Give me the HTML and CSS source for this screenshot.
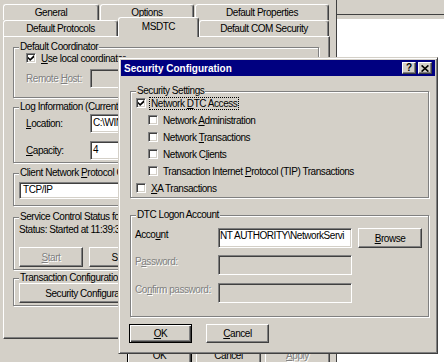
FILE: index.html
```html
<!DOCTYPE html>
<html lang="en">
<head>
    <meta charset="UTF-8">
    <meta name="viewport" content="width=device-width, initial-scale=1.0">
    <title>MSDTC Security Configuration</title>
    <link rel="stylesheet" href="styles.css">
</head>
<body>
    <div class="desktop">
        <div class="props">
            <div class="tab-row">
                <div class="tab w-general">General</div>
                <div class="tab w-options">Options</div>
                <div class="tab w-defprops">Default Properties</div>
            </div>
            <div class="tab-row">
                <div class="tab w-protocols">Default Protocols</div>
                <div class="tab w-msdtc selected">MSDTC</div>
                <div class="tab w-comsec">Default COM Security</div>
            </div>
            <div class="panel">
                <div class="group g-coord">
                    <div class="group-title">Default Coordinator</div>
                    <div class="check-row bg-check">
                        <span class="check"><svg viewBox="0 0 7 7"><polygon points="0,2 2.5,4.5 7,0 7,3 2.5,7 0,4.5"/></svg></span>
                        <span class="check-label"><u>U</u>se local coordinator</span>
                    </div>
                    <div class="field-row bg-field first">
                        <span class="field-label bg-label disabled">Remote <u>H</u>ost:</span>
                        <span class="edit disabled bg-edit"></span>
                    </div>
                </div>
                <div class="group g-log">
                    <div class="group-title">Log Information (Currently Active Log)</div>
                    <div class="field-row bg-field loc">
                        <span class="field-label bg-label"><u>L</u>ocation:</span>
                        <span class="edit bg-edit">C:\WINNT\System32\MSDtc\</span>
                    </div>
                    <div class="field-row bg-field cap">
                        <span class="field-label bg-label"><u>C</u>apacity:</span>
                        <span class="edit bg-edit">4</span>
                    </div>
                </div>
                <div class="group g-client">
                    <div class="group-title">Client Network <u>P</u>rotocol Configuration</div>
                    <div class="edit proto">TCP/IP</div>
                </div>
                <div class="group g-status">
                    <div class="group-title">Service Control Status for MSDTC</div>
                    <div class="status-line">Status: Started at 11:39:35 AM</div>
                    <div class="btn-row status-btns">
                        <button class="btn disabled w-small"><u>S</u>tart</button>
                        <button class="btn w-small">St<u>o</u>p</button>
                    </div>
                </div>
                <div class="group g-trans">
                    <div class="group-title">Transaction Configuration</div>
                    <button class="btn sec-btn">Security Configuration...</button>
                </div>
            </div>
            <div class="sheet-buttons">
                <button class="btn default w-sheet">OK</button>
                <button class="btn w-sheet">Cancel</button>
                <button class="btn disabled w-sheet"><u>A</u>pply</button>
            </div>
        </div>

        <div class="side">
            <div class="side-head"></div>
            <div class="side-gap"></div>
        </div>

        <div class="dialog">
            <div class="caption">
                <span class="caption-title">Security Configuration</span>
                <span class="cap-btn help">?</span>
                <span class="cap-btn close"><svg viewBox="0 0 8 7"><path d="M0.6 0.4 L7.4 6.6 M7.4 0.4 L0.6 6.6"/></svg></span>
            </div>
            <div class="dlg-body">
                <div class="group g-security">
                    <div class="group-title">Security Settings</div>
                    <div class="check-row dlg-check first">
                        <span class="check"><svg viewBox="0 0 7 7"><polygon points="0,2 2.5,4.5 7,0 7,3 2.5,7 0,4.5"/></svg></span>
                        <span class="check-label focus">Network <u>D</u>TC Access</span>
                    </div>
                    <div class="check-row dlg-check indent">
                        <span class="check"></span>
                        <span class="check-label">Network <u>A</u>dministration</span>
                    </div>
                    <div class="check-row dlg-check indent">
                        <span class="check"></span>
                        <span class="check-label">Network <u>T</u>ransactions</span>
                    </div>
                    <div class="check-row dlg-check indent">
                        <span class="check"></span>
                        <span class="check-label">Network C<u>l</u>ients</span>
                    </div>
                    <div class="check-row dlg-check indent">
                        <span class="check"></span>
                        <span class="check-label">Transaction Internet <u>P</u>rotocol (TIP) Transactions</span>
                    </div>
                    <div class="check-row dlg-check">
                        <span class="check"></span>
                        <span class="check-label"><u>X</u>A Transactions</span>
                    </div>
                </div>
                <div class="group g-logon">
                    <div class="group-title">DTC Logon Account</div>
                    <div class="logon-row account">
                        <span class="logon-label">Acco<u>u</u>nt</span>
                        <span class="edit logon-edit">NT AUTHORITY\NetworkServi</span>
                        <button class="btn browse"><u>B</u>rowse</button>
                    </div>
                    <div class="logon-row password">
                        <span class="logon-label disabled">P<u>a</u>ssword:</span>
                        <span class="edit disabled logon-edit"></span>
                    </div>
                    <div class="logon-row confirm">
                        <span class="logon-label disabled">Co<u>n</u>firm password:</span>
                        <span class="edit disabled logon-edit"></span>
                    </div>
                </div>
                <div class="btn-row dlg-buttons">
                    <button class="btn default w-dlg"><u>O</u>K</button>
                    <button class="btn w-dlg"><u>C</u>ancel</button>
                </div>
            </div>
        </div>
    </div>
</body>
</html>
```

FILE: styles.css
```css
* {
    box-sizing: border-box;
}

body {
    margin: 0;
    background-color: #fff;
    font-family: "Liberation Sans", Arial, sans-serif;
    font-size: 10px;
    letter-spacing: -0.45px;
    color: #000;
    overflow: hidden;
}

u {
    text-decoration: underline;
}

.desktop {
    position: relative;
    width: 444px;
    height: 362px;
    overflow: hidden;
}

/* property sheet behind the dialog */

.props {
    position: absolute;
    left: 0;
    top: 0;
    width: 337px;
    height: 362px;
    padding: 4px 0 0 3px;
    background-color: #d4d0c8;
    border-right: 1px solid #404040;
}

.tab-row {
    display: flex;
    align-items: flex-start;
    height: 16px;
}

.tab {
    height: 16px;
    line-height: 15px;
    text-align: center;
    white-space: nowrap;
    background-color: #d4d0c8;
    border: 1px solid;
    border-bottom: 0;
    border-color: #fff #404040 #fff #fff;
    border-radius: 3px 3px 0 0;
    box-shadow: inset -1px 0 #808080;
}

.w-general { width: 96px; margin-right: 1px; }
.w-options { width: 94px; margin-right: 1px; }
.w-defprops { width: 134px; }
.w-protocols { width: 115px; }
.w-msdtc { width: 81px; }
.w-comsec { width: 130px; }

.tab.selected {
    position: relative;
    z-index: 2;
    height: 20px;
    margin-top: -3px;
    line-height: 17px;
}

.panel {
    width: 327px;
    height: 303px;
    padding: 0 10px 0 9px;
    border: 1px solid;
    border-color: #fff #404040 #404040 #fff;
    box-shadow: inset -1px -1px #808080;
}

.group {
    border: 1px solid #808080;
    box-shadow: inset 1px 1px #fff, 1px 1px #fff;
}

.group-title {
    width: max-content;
    margin: -7px 0 0 5px;
    padding: 0 1px;
    line-height: 12px;
    background-color: #d4d0c8;
    white-space: nowrap;
}

.g-coord { margin-top: 10px; height: 51px; }
.g-log { margin-top: 9px; height: 56px; }
.g-client { margin-top: 10px; height: 33px; }
.g-status { margin-top: 11px; height: 53px; }
.g-trans { margin-top: 8px; height: 28px; }

.check-row {
    display: flex;
    align-items: flex-start;
    height: 17px;
    white-space: nowrap;
}

.check {
    flex: none;
    width: 10px;
    height: 10px;
    margin: 3px 3px 0 0;
    padding: 1px;
    background-color: #fff;
    border: 1px solid;
    border-color: #808080 #fff #fff #808080;
    box-shadow: inset 1px 1px #404040, inset -1px -1px #d4d0c8;
}

.check svg {
    display: block;
    width: 6px;
    height: 6px;
    fill: #000;
}

.check-label {
    margin-top: 2px;
    padding: 0 1px;
    line-height: 11px;
    border: 1px dotted transparent;
}

.check-label.focus {
    border-color: #000;
}

.bg-check {
    margin-top: -3px;
    padding-left: 12px;
}

.field-row {
    display: flex;
    align-items: center;
    white-space: nowrap;
}

.bg-field {
    padding-left: 12px;
}

.bg-field.first { margin-top: 2px; }
.bg-field.loc { margin-top: 1px; }
.bg-field.cap { margin-top: 8px; }

.bg-label {
    width: 64px;
}

.disabled {
    color: #808080;
    text-shadow: 1px 1px #fff;
}

.edit {
    display: block;
    height: 19px;
    padding: 0 1px;
    line-height: 15px;
    overflow: hidden;
    white-space: nowrap;
    background-color: #fff;
    border: 1px solid;
    border-color: #808080 #fff #fff #808080;
    box-shadow: inset 1px 1px #404040, inset -1px -1px #d4d0c8;
}

.edit.disabled {
    background-color: #d4d0c8;
}

.bg-edit {
    width: 200px;
    padding-left: 2px;
}

.proto {
    width: 292px;
    height: 17px;
    margin: 3px 0 0 5px;
    padding-left: 3px;
    line-height: 13px;
}

.status-line {
    margin: 1px 0 0 5px;
    line-height: 12px;
    white-space: nowrap;
}

.btn-row {
    display: flex;
}

.status-btns {
    margin: 11px 0 0 5px;
    gap: 6px;
}

.btn {
    flex: none;
    height: 20px;
    padding: 0;
    font: inherit;
    letter-spacing: inherit;
    color: #000;
    text-align: center;
    white-space: nowrap;
    background-color: #d4d0c8;
    border: 1px solid;
    border-color: #fff #404040 #404040 #fff;
    box-shadow: inset -1px -1px #808080;
}

.btn.default {
    border-color: #000;
    box-shadow: inset 1px 1px #fff, inset -1px -1px #404040, inset -2px -2px #808080;
}

.btn.disabled {
    color: #808080;
}

.w-small { width: 64px; }

.sec-btn {
    display: block;
    width: 148px;
    margin: -1px 0 0 5px;
}

.sheet-buttons {
    display: flex;
    justify-content: flex-end;
    gap: 4px;
    margin-top: 6px;
    padding-right: 6px;
}

.w-sheet { width: 65px; }

/* window at the right */

.side {
    position: absolute;
    left: 337px;
    top: 0;
    right: 0;
    bottom: 0;
    background-color: #fff;
}

.side-head {
    height: 15px;
    background-color: #d4d0c8;
    border-bottom: 1px solid #404040;
}

.side-gap {
    height: 4px;
    background-color: #d4d0c8;
}

/* Security Configuration dialog */

.dialog {
    position: absolute;
    left: 118px;
    top: 57px;
    z-index: 5;
    width: 320px;
    height: 297px;
    padding: 2px;
    background-color: #d4d0c8;
    border: 1px solid;
    border-color: #d4d0c8 #404040 #404040 #d4d0c8;
    box-shadow: inset 1px 1px #fff, inset -1px -1px #808080;
}

.caption {
    display: flex;
    align-items: center;
    height: 16px;
    padding: 0 3px 0 3px;
    background-color: #000080;
    color: #fff;
}

.caption-title {
    flex: 1;
    font-weight: bold;
    letter-spacing: 0;
    white-space: nowrap;
}

.cap-btn {
    display: flex;
    align-items: center;
    justify-content: center;
    width: 14px;
    height: 12px;
    color: #000;
    background-color: #d4d0c8;
    border: 1px solid;
    border-color: #fff #404040 #404040 #fff;
    box-shadow: inset -1px -1px #808080;
}

.cap-btn.help {
    font-weight: bold;
    font-size: 10px;
    letter-spacing: 0;
    line-height: 10px;
}

.cap-btn.close {
    margin-left: 2px;
}

.cap-btn svg {
    width: 8px;
    height: 7px;
    stroke: #000;
    stroke-width: 1.6;
    fill: none;
}

.dlg-body {
    padding: 0 6px 0 9px;
}

.g-security { margin-top: 15px; height: 107px; }
.g-logon { margin-top: 17px; height: 102px; }

.dlg-check {
    padding-left: 5px;
}

.dlg-check.first {
    margin-top: -2px;
}

.dlg-check.indent {
    padding-left: 17px;
}

.logon-row {
    display: flex;
    align-items: flex-start;
    padding-left: 4px;
    white-space: nowrap;
}

.logon-row.account { margin-top: 7px; }
.logon-row.password { margin-top: 7px; }
.logon-row.confirm { margin-top: 8px; }

.logon-label {
    width: 83px;
    line-height: 12px;
    margin-top: 1px;
}

.logon-edit {
    width: 134px;
    height: 20px;
    line-height: 14px;
}

.browse {
    width: 64px;
    margin-left: 6px;
}

.dlg-buttons {
    margin: 7px 0 0 -1px;
    gap: 14px;
}

.w-dlg {
    width: 63px;
    height: 19px;
}
```
